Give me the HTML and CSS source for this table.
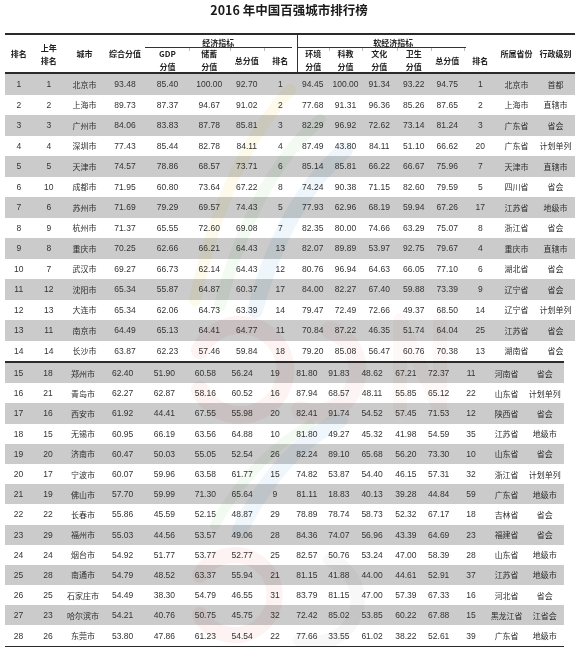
FILE: index.html
```html
<!DOCTYPE html>
<html lang="zh-CN">
<head>
<meta charset="utf-8">
<title>2016 年中国百强城市排行榜</title>
<link rel="stylesheet" href="styles.css">
</head>
<body>
<div class="page">
  <h1 class="title">2016 年中国百强城市排行榜</h1>

  <div class="head">
    <div class="h span2 c1">排名</div>
    <div class="h span2 c2">上年<br>排名</div>
    <div class="h span2 c3">城市</div>
    <div class="h span2 c4">综合分值</div>
    <div class="h group econ">经济指标</div>
    <div class="h sub c5">GDP<br>分值</div>
    <div class="h sub c6">储蓄<br>分值</div>
    <div class="h sub c7">总分值</div>
    <div class="h sub c8">排名</div>
    <div class="h group soft">软经济指标</div>
    <div class="h sub c9 divider">环境<br>分值</div>
    <div class="h sub c10">科教<br>分值</div>
    <div class="h sub c11">文化<br>分值</div>
    <div class="h sub c12">卫生<br>分值</div>
    <div class="h sub c13">总分值</div>
    <div class="h sub c14">排名</div>
    <div class="h span2 c15">所属省份</div>
    <div class="h span2 c16">行政级别</div>
  </div>

  <div class="section top">
    <div class="row"><span>1</span><span>1</span><span class="zh">北京市</span><span>93.48</span><span>85.40</span><span>100.00</span><span>92.70</span><span>1</span><span>94.45</span><span>100.00</span><span>91.34</span><span>93.22</span><span>94.75</span><span>1</span><span class="zh">北京市</span><span class="zh">首都</span></div>
    <div class="row"><span>2</span><span>2</span><span class="zh">上海市</span><span>89.73</span><span>87.37</span><span>94.67</span><span>91.02</span><span>2</span><span>77.68</span><span>91.31</span><span>96.36</span><span>85.26</span><span>87.65</span><span>2</span><span class="zh">上海市</span><span class="zh">直辖市</span></div>
    <div class="row"><span>3</span><span>3</span><span class="zh">广州市</span><span>84.06</span><span>83.83</span><span>87.78</span><span>85.81</span><span>3</span><span>82.29</span><span>96.92</span><span>72.62</span><span>73.14</span><span>81.24</span><span>3</span><span class="zh">广东省</span><span class="zh">省会</span></div>
    <div class="row"><span>4</span><span>4</span><span class="zh">深圳市</span><span>77.43</span><span>85.44</span><span>82.78</span><span>84.11</span><span>4</span><span>87.49</span><span>43.80</span><span>84.11</span><span>51.10</span><span>66.62</span><span>20</span><span class="zh">广东省</span><span class="zh">计划单列</span></div>
    <div class="row"><span>5</span><span>5</span><span class="zh">天津市</span><span>74.57</span><span>78.86</span><span>68.57</span><span>73.71</span><span>6</span><span>85.14</span><span>85.81</span><span>66.22</span><span>66.67</span><span>75.96</span><span>7</span><span class="zh">天津市</span><span class="zh">直辖市</span></div>
    <div class="row"><span>6</span><span>10</span><span class="zh">成都市</span><span>71.95</span><span>60.80</span><span>73.64</span><span>67.22</span><span>8</span><span>74.24</span><span>90.38</span><span>71.15</span><span>82.60</span><span>79.59</span><span>5</span><span class="zh">四川省</span><span class="zh">省会</span></div>
    <div class="row"><span>7</span><span>6</span><span class="zh">苏州市</span><span>71.69</span><span>79.29</span><span>69.57</span><span>74.43</span><span>5</span><span>77.93</span><span>62.96</span><span>68.19</span><span>59.94</span><span>67.26</span><span>17</span><span class="zh">江苏省</span><span class="zh">地级市</span></div>
    <div class="row"><span>8</span><span>9</span><span class="zh">杭州市</span><span>71.37</span><span>65.55</span><span>72.60</span><span>69.08</span><span>7</span><span>82.35</span><span>80.00</span><span>74.66</span><span>63.29</span><span>75.07</span><span>8</span><span class="zh">浙江省</span><span class="zh">省会</span></div>
    <div class="row"><span>9</span><span>8</span><span class="zh">重庆市</span><span>70.25</span><span>62.66</span><span>66.21</span><span>64.43</span><span>13</span><span>82.07</span><span>89.89</span><span>53.97</span><span>92.75</span><span>79.67</span><span>4</span><span class="zh">重庆市</span><span class="zh">直辖市</span></div>
    <div class="row"><span>10</span><span>7</span><span class="zh">武汉市</span><span>69.27</span><span>66.73</span><span>62.14</span><span>64.43</span><span>12</span><span>80.76</span><span>96.94</span><span>64.63</span><span>66.05</span><span>77.10</span><span>6</span><span class="zh">湖北省</span><span class="zh">省会</span></div>
    <div class="row"><span>11</span><span>12</span><span class="zh">沈阳市</span><span>65.34</span><span>55.87</span><span>64.87</span><span>60.37</span><span>17</span><span>84.00</span><span>82.27</span><span>67.40</span><span>59.88</span><span>73.39</span><span>9</span><span class="zh">辽宁省</span><span class="zh">省会</span></div>
    <div class="row"><span>12</span><span>13</span><span class="zh">大连市</span><span>65.34</span><span>62.06</span><span>64.73</span><span>63.39</span><span>14</span><span>79.47</span><span>72.49</span><span>72.66</span><span>49.37</span><span>68.50</span><span>14</span><span class="zh">辽宁省</span><span class="zh">计划单列</span></div>
    <div class="row"><span>13</span><span>11</span><span class="zh">南京市</span><span>64.49</span><span>65.13</span><span>64.41</span><span>64.77</span><span>11</span><span>70.84</span><span>87.22</span><span>46.35</span><span>51.74</span><span>64.04</span><span>25</span><span class="zh">江苏省</span><span class="zh">省会</span></div>
    <div class="row"><span>14</span><span>14</span><span class="zh">长沙市</span><span>63.87</span><span>62.23</span><span>57.46</span><span>59.84</span><span>18</span><span>79.20</span><span>85.08</span><span>56.47</span><span>60.76</span><span>70.38</span><span>13</span><span class="zh">湖南省</span><span class="zh">省会</span></div>
  </div>

  <div class="section bottom">
    <div class="row"><span>15</span><span>18</span><span class="zh">郑州市</span><span>62.40</span><span>51.90</span><span>60.58</span><span>56.24</span><span>19</span><span>81.80</span><span>91.83</span><span>48.62</span><span>67.21</span><span>72.37</span><span>11</span><span class="zh">河南省</span><span class="zh">省会</span></div>
    <div class="row"><span>16</span><span>21</span><span class="zh">青岛市</span><span>62.27</span><span>62.87</span><span>58.16</span><span>60.52</span><span>16</span><span>87.94</span><span>68.57</span><span>48.11</span><span>55.85</span><span>65.12</span><span>22</span><span class="zh">山东省</span><span class="zh">计划单列</span></div>
    <div class="row"><span>17</span><span>16</span><span class="zh">西安市</span><span>61.92</span><span>44.41</span><span>67.55</span><span>55.98</span><span>20</span><span>82.41</span><span>91.74</span><span>54.52</span><span>57.45</span><span>71.53</span><span>12</span><span class="zh">陕西省</span><span class="zh">省会</span></div>
    <div class="row"><span>18</span><span>15</span><span class="zh">无锡市</span><span>60.95</span><span>66.19</span><span>63.56</span><span>64.88</span><span>10</span><span>81.80</span><span>49.27</span><span>45.32</span><span>41.98</span><span>54.59</span><span>35</span><span class="zh">江苏省</span><span class="zh">地级市</span></div>
    <div class="row"><span>19</span><span>20</span><span class="zh">济南市</span><span>60.47</span><span>50.03</span><span>55.05</span><span>52.54</span><span>26</span><span>82.24</span><span>89.10</span><span>65.68</span><span>56.20</span><span>73.30</span><span>10</span><span class="zh">山东省</span><span class="zh">省会</span></div>
    <div class="row"><span>20</span><span>17</span><span class="zh">宁波市</span><span>60.07</span><span>59.96</span><span>63.58</span><span>61.77</span><span>15</span><span>74.82</span><span>53.87</span><span>54.40</span><span>46.15</span><span>57.31</span><span>32</span><span class="zh">浙江省</span><span class="zh">计划单列</span></div>
    <div class="row"><span>21</span><span>19</span><span class="zh">佛山市</span><span>57.70</span><span>59.99</span><span>71.30</span><span>65.64</span><span>9</span><span>81.11</span><span>18.83</span><span>40.13</span><span>39.28</span><span>44.84</span><span>59</span><span class="zh">广东省</span><span class="zh">地级市</span></div>
    <div class="row"><span>22</span><span>22</span><span class="zh">长春市</span><span>55.86</span><span>45.59</span><span>52.15</span><span>48.87</span><span>29</span><span>78.89</span><span>78.74</span><span>58.73</span><span>52.32</span><span>67.17</span><span>18</span><span class="zh">吉林省</span><span class="zh">省会</span></div>
    <div class="row"><span>23</span><span>29</span><span class="zh">福州市</span><span>55.03</span><span>44.56</span><span>53.57</span><span>49.06</span><span>28</span><span>84.36</span><span>74.07</span><span>56.96</span><span>43.39</span><span>64.69</span><span>23</span><span class="zh">福建省</span><span class="zh">省会</span></div>
    <div class="row"><span>24</span><span>24</span><span class="zh">烟台市</span><span>54.92</span><span>51.77</span><span>53.77</span><span>52.77</span><span>25</span><span>82.57</span><span>50.76</span><span>53.24</span><span>47.00</span><span>58.39</span><span>28</span><span class="zh">山东省</span><span class="zh">地级市</span></div>
    <div class="row"><span>25</span><span>28</span><span class="zh">南通市</span><span>54.79</span><span>48.52</span><span>63.37</span><span>55.94</span><span>21</span><span>81.15</span><span>41.88</span><span>44.00</span><span>44.61</span><span>52.91</span><span>37</span><span class="zh">江苏省</span><span class="zh">地级市</span></div>
    <div class="row"><span>26</span><span>25</span><span class="zh">石家庄市</span><span>54.49</span><span>38.30</span><span>54.79</span><span>46.55</span><span>31</span><span>83.79</span><span>81.15</span><span>47.00</span><span>57.39</span><span>67.33</span><span>16</span><span class="zh">河北省</span><span class="zh">省会</span></div>
    <div class="row"><span>27</span><span>23</span><span class="zh">哈尔滨市</span><span>54.21</span><span>40.76</span><span>50.75</span><span>45.75</span><span>32</span><span>72.42</span><span>85.02</span><span>53.85</span><span>60.22</span><span>67.88</span><span>15</span><span class="zh">黑龙江省</span><span class="zh">江省会</span></div>
    <div class="row"><span>28</span><span>26</span><span class="zh">东莞市</span><span>53.80</span><span>47.86</span><span>61.23</span><span>54.54</span><span>22</span><span>77.66</span><span>33.55</span><span>61.02</span><span>38.22</span><span>52.61</span><span>39</span><span class="zh">广东省</span><span class="zh">地级市</span></div>
  </div>

  <svg class="watermark" width="578" height="647" viewBox="0 0 578 647" aria-hidden="true">
    <g fill="none" stroke-linecap="round">
      <path d="M195 300 Q225 160 290 90" stroke="#f3dc7a" stroke-width="12" opacity="0.35"/>
      <path d="M220 305 Q255 175 320 120" stroke="#a9d9a0" stroke-width="12" opacity="0.35"/>
      <path d="M255 310 Q285 200 345 150" stroke="#8ec3ec" stroke-width="16" opacity="0.35"/>
      <path d="M200 350 A45 45 0 1 1 200 390" stroke="#f0a8a8" stroke-width="18" opacity="0.3"/>
      <path d="M330 330 A40 40 0 1 1 300 410" stroke="#f0a8a8" stroke-width="18" opacity="0.25"/>
      <path d="M400 320 L400 410 M400 320 L440 410 L440 320" stroke="#f0a8a8" stroke-width="14" opacity="0.2"/>
      <path d="M240 530 Q280 450 340 420" stroke="#8ec3ec" stroke-width="16" opacity="0.3"/>
      <path d="M215 525 Q250 460 310 425" stroke="#a9d9a0" stroke-width="10" opacity="0.3"/>
      <path d="M200 575 A40 40 0 1 1 200 615" stroke="#f0a8a8" stroke-width="16" opacity="0.3"/>
      <path d="M330 560 A40 40 0 1 1 300 640" stroke="#e2e2e2" stroke-width="14" opacity="0.6"/>
    </g>
  </svg>
</div>
</body>
</html>
```

FILE: styles.css
```css
* { box-sizing: border-box; }

html, body {
  margin: 0;
  padding: 0;
  background: #ffffff;
}

body {
  width: 578px;
  height: 647px;
  overflow: hidden;
  font-family: "Liberation Sans Narrow", "Liberation Sans", "Noto Sans CJK SC", sans-serif;
  color: #333333;
}

.page {
  position: relative;
  width: 578px;
  height: 647px;
  padding-left: 5px;
}

.title {
  margin: 0;
  height: 33px;
  padding-top: 3px;
  padding-right: 5px;
  text-align: center;
  font-family: "Noto Sans CJK SC", sans-serif;
  font-size: 12.5px;
  line-height: 14px;
  font-weight: 700;
  color: #1a1a1a;
}

/* header */
.head {
  width: 570px;
  display: grid;
  grid-template-columns: 27.5fr 32.5fr 39fr 42fr 43fr 40.5fr 34.5fr 32.5fr 32.5fr 33fr 34.5fr 34.5fr 32.5fr 33.5fr 39fr 39fr;
  grid-template-rows: 13px 24px;
  border-top: 2px solid #2a2a2a;
  border-bottom: 2px solid #2a2a2a;
  height: 41px;
}

.h {
  display: flex;
  align-items: center;
  justify-content: center;
  text-align: center;
  font-family: "Noto Sans CJK SC", sans-serif;
  font-size: 8px;
  line-height: 13px;
  font-weight: 700;
  color: #222222;
}

.span2 { grid-row: 1 / 3; }
.sub { grid-row: 2; }

.c1 { grid-column: 1; }
.c2 { grid-column: 2; }
.c3 { grid-column: 3; }
.c4 { grid-column: 4; }
.c5 { grid-column: 5; }
.c6 { grid-column: 6; }
.c7 { grid-column: 7; }
.c8 { grid-column: 8; }
.c9 { grid-column: 9; }
.c10 { grid-column: 10; }
.c11 { grid-column: 11; }
.c12 { grid-column: 12; }
.c13 { grid-column: 13; }
.c14 { grid-column: 14; }
.c15 { grid-column: 15; }
.c16 { grid-column: 16; }

.group {
  grid-row: 1;
  padding-top: 2px;
}

.econ {
  grid-column: 5 / 9;
  border-bottom: 1px solid #333333;
  margin-left: -1px;
  margin-right: 5px;
}

.soft {
  grid-column: 9 / 15;
  border-left: 1px solid #333333;
  background: linear-gradient(#333333, #333333) left bottom / 168px 1px no-repeat;
  padding-right: 8px;
}

.divider { border-left: 1px solid #333333; }

.sub + .sub:not(.divider) {
  background: linear-gradient(#bdbdbd, #bdbdbd) left top / 1px 3px no-repeat;
}

/* body rows */
.section .row {
  display: grid;
  grid-template-columns: 27.5fr 32.5fr 39fr 42fr 43fr 40.5fr 34.5fr 32.5fr 32.5fr 33fr 34.5fr 34.5fr 32.5fr 33.5fr 39fr 39fr;
  align-items: center;
  font-size: 8.5px;
  color: #333333;
}

.section .row span {
  text-align: center;
  white-space: nowrap;
}

.section .row .zh {
  font-family: "Noto Sans CJK SC", sans-serif;
  font-size: 8px;
  color: #2e2e2e;
}

.section .row:nth-child(odd) { background: #cbcbcb; }

.top { width: 570px; }
.top .row { height: 20.5px; }

.bottom {
  width: 559px;
  border-top: 2px solid #2a2a2a;
  border-bottom: 1.5px solid #2a2a2a;
}
.bottom .row { height: 20.2px; }

.watermark {
  position: absolute;
  left: 0;
  top: 0;
  pointer-events: none;
  mix-blend-mode: multiply;
  opacity: 0.45;
}
```
